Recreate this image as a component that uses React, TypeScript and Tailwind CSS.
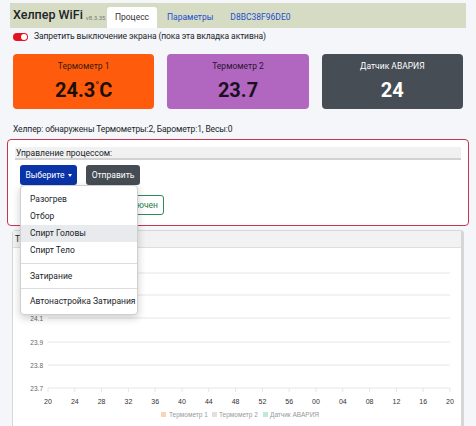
import React from "react";

const menu = ["Разогрев", "Отбор", "Спирт Головы", "Спирт Тело"];

const xTicks = ["20", "24", "28", "32", "36", "40", "44", "48", "52", "56", "00", "04", "08", "12", "16", "20"];
const grid = [
  { y: 25, label: "" },
  { y: 47, label: "" },
  { y: 70, label: "24.1" },
  { y: 94, label: "23.9" },
  { y: 117, label: "23.8" },
  { y: 140, label: "23.7" },
];

function Chart() {
  return (
    <svg width="448" height="182" className="block" fontFamily="'Liberation Sans', sans-serif">
      {grid.map((g) => (
        <g key={g.y}>
          <line x1="35" x2="437" y1={g.y} y2={g.y} stroke="#e6e6e6" strokeWidth="1" />
          {g.label && (
            <text x="30" y={g.y + 2.5} fontSize="6.5" fill="#666" textAnchor="end">
              {g.label}
            </text>
          )}
        </g>
      ))}
      {xTicks.map((t, i) => (
        <g key={i}>
          <line x1={35 + i * 26.8} x2={35 + i * 26.8} y1="140" y2="144" stroke="#e6e6e6" />
          <text x={35 + i * 26.8} y="156" fontSize="7" fill="#333" textAnchor="middle">
            {t}
          </text>
        </g>
      ))}
      <g fontSize="6.5" fill="#999">
        <rect x="148" y="164" width="5" height="5" fill="#fbd3b5" />
        <text x="156" y="169">Термометр 1</text>
        <rect x="199" y="164" width="5" height="5" fill="#e0e0e0" />
        <text x="206" y="169">Термометр 2</text>
        <rect x="250" y="164" width="5" height="5" fill="#bfe8dc" />
        <text x="257" y="169">Датчик АВАРИЯ</text>
      </g>
    </svg>
  );
}

export default function App() {
  return (
    <div
      className="relative h-[426px] w-[476px] overflow-hidden bg-[#f4f6f9] text-[#212529]"
      style={{ fontFamily: "Roboto, 'Noto Sans', sans-serif" }}
    >
      {/* navbar */}
      <div className="mx-[10px] mt-[3px] flex h-[25px] items-end bg-[#d6dcc3] pl-[3px]">
        <div className="flex h-full w-[94px] items-center gap-[3px] whitespace-nowrap">
          <span className="text-[12.5px] font-medium leading-none">Хелпер WiFi</span>
          <span className="mt-[3px] text-[6px] text-[#777]">v8.3.35</span>
        </div>
        <div className="flex h-[21px] w-[50px] items-center justify-center rounded-t-[3px] bg-white text-[8.5px] text-[#333]">
          Процесс
        </div>
        <div className="flex h-[21px] items-center pl-[10px] pr-[17px] text-[8.5px] text-[#1c4fd0]">Параметры</div>
        <div className="flex h-[21px] items-center text-[8.5px] text-[#1c4fd0]">D8BC38F96DE0</div>
      </div>

      {/* screen switch */}
      <div className="mt-[3px] flex h-[11px] items-center gap-[6px] pl-[13px]">
        <div className="flex h-[8px] w-[15px] items-center justify-end rounded-full bg-[#e5121f] pr-[1px]">
          <div className="h-[6px] w-[6px] rounded-full bg-white" />
        </div>
        <span className="text-[8.5px] leading-none tracking-[-0.1px]">
          Запретить выключение экрана (пока эта вкладка активна)
        </span>
      </div>

      {/* sensor cards */}
      <div className="mt-[12px] grid grid-cols-3 gap-[13px] px-[13px]">
        <div className="flex h-[55px] flex-col items-center rounded-[4px] bg-[#ff5b0c] pt-[6px]">
          <span className="text-[8.5px] text-[#3a1a10]">Термометр 1</span>
          <span className="mt-[5px] text-[20px] font-bold leading-[24px] text-[#1a0f0a]">
            24.3<sup className="text-[12px]">˚</sup>C
          </span>
        </div>
        <div className="flex h-[55px] flex-col items-center rounded-[4px] bg-[#b167c0] pt-[6px]">
          <span className="text-[8.5px] text-[#2a1430]">Термометр 2</span>
          <span className="mt-[5px] text-[20px] font-bold leading-[24px] text-[#1c0f22]">23.7</span>
        </div>
        <div className="flex h-[55px] flex-col items-center rounded-[4px] bg-[#464d55] pt-[6px]">
          <span className="text-[8.5px] text-white">Датчик АВАРИЯ</span>
          <span className="mt-[5px] text-[20px] font-bold leading-[24px] text-white">24</span>
        </div>
      </div>

      <div className="mt-[14px] pl-[13px] text-[8.5px] leading-[12px] tracking-[-0.1px]">
        Хелпер: обнаружены Термометры:2, Барометр:1, Весы:0
      </div>

      {/* process control */}
      <div className="mx-[7px] mt-[4px] h-[87px] rounded-[4px] border-[1.5px] border-[#c63650] bg-white px-[7px] pt-[7px]">
        <div className="h-[13px] border-b-2 border-[#d2d2d2] bg-[#f1f1f1] pl-[1px] text-[8.5px] leading-[12px]">
          Управление процессом:
        </div>
        <div className="mt-[5px] flex gap-[9px] pl-[5px]">
          <div className="flex h-[20px] w-[57px] items-center justify-center gap-[3px] rounded-[3px] bg-[#0a33a8] text-[8.5px] text-white">
            Выберите
            <span className="mt-[1px] border-x-[2.5px] border-t-[3px] border-x-transparent border-t-white" />
          </div>
          <div className="flex h-[20px] w-[54px] items-center justify-center rounded-[3px] bg-[#454c54] text-[8.5px] text-white">
            Отправить
          </div>
        </div>
        <div className="mt-[10px] flex pl-[87px]">
          <div className="flex h-[20px] w-[62px] items-center justify-end rounded-[3px] border border-[#2e8b57] pr-[5px] text-[8.5px] text-[#1f7a44]">
            Подключен
          </div>
        </div>
      </div>

      {/* chart panel */}
      <div className="mx-[12px] mt-[4px] rounded-t-[4px] border border-r-[3px] border-[#d6d6d6] bg-white">
        <div className="h-[17px] border-b border-[#dedede] bg-[#f2f2f2] pl-[2px] text-[8.5px] leading-[17px]">
          Те
        </div>
        <Chart />
      </div>

      {/* dropdown */}
      <div className="absolute left-[20px] top-[185px] w-[118px] rounded-[4px] border border-[#cfcfcf] bg-white pb-[4px] pt-[5px] shadow-[0_3px_8px_rgba(0,0,0,0.2)]">
        {menu.map((m) => (
          <div
            key={m}
            className={
              m === "Спирт Головы"
                ? "flex h-[17px] items-center bg-[#e8eaed] pl-[9px] text-[8.5px]"
                : "flex h-[17px] items-center pl-[9px] text-[8.5px]"
            }
          >
            {m}
          </div>
        ))}
        <div className="my-[4px] border-t border-[#dcdcdc]" />
        <div className="flex h-[16px] items-center pl-[9px] text-[8.5px]">Затирание</div>
        <div className="my-[4px] border-t border-[#dcdcdc]" />
        <div className="flex h-[17px] items-center whitespace-nowrap pl-[9px] text-[8.5px]">
          Автонастройка Затирания
        </div>
      </div>
    </div>
  );
}
